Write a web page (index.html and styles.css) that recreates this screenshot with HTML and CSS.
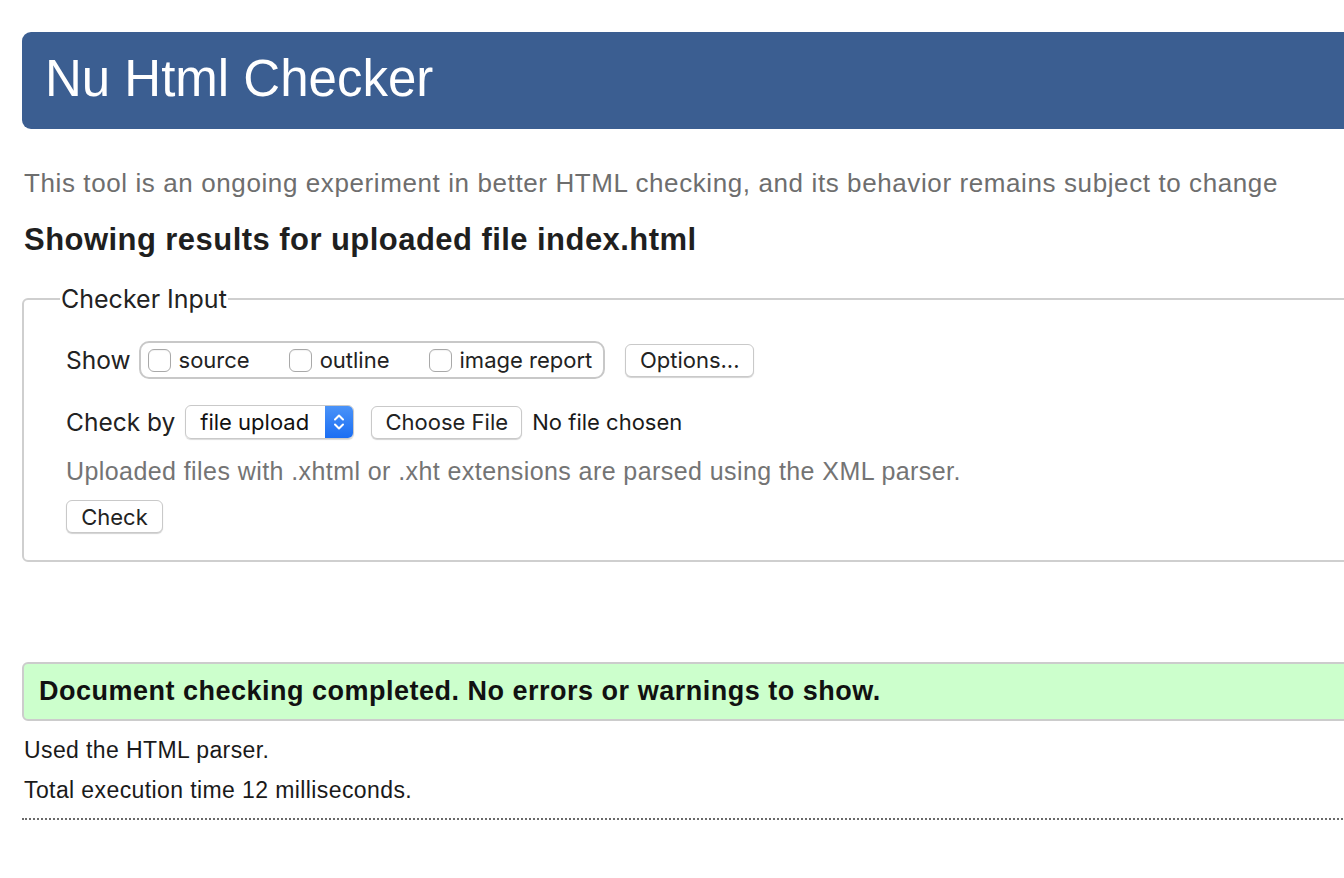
FILE: index.html
```html
<!DOCTYPE html>
<html lang="en">
<head>
<meta charset="utf-8">
<title>Nu Html Checker</title>
<link rel="stylesheet" href="styles.css">
</head>
<body>
<div class="page">
  <h1 class="banner">Nu Html Checker</h1>
  <p class="intro">This tool is an ongoing experiment in better HTML checking, and its behavior remains subject to change</p>
  <h2 class="results-title">Showing results for uploaded file index.html</h2>
  <fieldset class="checker">
    <legend class="legend">Checker Input</legend>
    <div class="row show-row">
      <span class="label">Show</span>
      <div class="show-group">
        <label class="opt"><span class="cb"></span>source</label>
        <label class="opt"><span class="cb"></span>outline</label>
        <label class="opt"><span class="cb"></span>image report</label>
      </div>
      <button class="btn options">Options...</button>
    </div>
    <div class="row by-row">
      <span class="label">Check by</span>
      <div class="select">
        <span class="select-text">file upload</span>
        <span class="stepper">
          <svg width="14" height="22" viewBox="0 0 14 22"><path d="M3 8.5 L7 4.5 L11 8.5 M3 13.5 L7 17.5 L11 13.5" fill="none" stroke="#fff" stroke-width="2" stroke-linecap="round" stroke-linejoin="round"/></svg>
        </span>
      </div>
      <button class="btn choose">Choose File</button>
      <span class="nofile">No file chosen</span>
    </div>
    <p class="hint">Uploaded files with .xhtml or .xht extensions are parsed using the XML parser.</p>
    <button class="btn check">Check</button>
  </fieldset>
  <div class="success">Document checking completed. No errors or warnings to show.</div>
  <p class="meta">Used the HTML parser.</p>
  <p class="meta">Total execution time 12 milliseconds.</p>
  <hr class="dots">
</div>
</body>
</html>
```

FILE: styles.css
```css
html, body {
  margin: 0;
  padding: 0;
  background: #fff;
  overflow: hidden;
}
body {
  font-family: "Liberation Sans", Arial, sans-serif;
  color: #222;
}
.page {
  width: 1400px;
  padding: 32px 0 0 22px;
}
.banner {
  margin: 0;
  height: 97px;
  box-sizing: border-box;
  background: #3b5e91;
  color: #fff;
  border-radius: 9px;
  font-weight: normal;
  font-size: 51px;
  line-height: 94px;
  padding-left: 23px;
}
.intro {
  margin: 40px 0 0 2px;
  font-size: 26px;
  letter-spacing: 0.6px;
  line-height: 28px;
  color: #6e6e6e;
}
.results-title {
  margin: 27px 0 0 2px;
  font-size: 31px;
  letter-spacing: 0.45px;
  line-height: 32px;
  color: #1f1f1f;
}
.checker {
  margin: 28px 0 0 0;
  border: 2px solid #cfcfcf;
  border-radius: 6px;
  padding: 8px 0 26px 42px;
  height: 278px;
  box-sizing: border-box;
  font-family: "Inter", "Liberation Sans", sans-serif;
}
.legend {
  font-size: 25px;
  color: #222;
  padding: 0 1px;
  margin-left: -6px;
}
.row {
  display: flex;
  align-items: center;
}
.label {
  font-size: 24.5px;
  color: #222;
}
.show-row {
  margin-top: 19px;
}
.show-group {
  display: flex;
  align-items: center;
  margin-left: 8px;
  border: 2px solid #c8c8c8;
  border-radius: 10px;
  height: 38px;
  box-sizing: border-box;
  padding: 0 11px 0 7px;
  gap: 39px;
}
.opt {
  display: flex;
  align-items: center;
  font-size: 22px;
  color: #222;
}
.cb {
  width: 23px;
  height: 23px;
  box-sizing: border-box;
  border: 1.5px solid #a9a9a9;
  border-radius: 6px;
  background: #fff;
  margin-right: 8px;
  box-shadow: inset 0 1px 1px rgba(0,0,0,0.05);
}
.btn {
  font-family: "Inter", "Liberation Sans", sans-serif;
  font-size: 22px;
  color: #222;
  background: #fff;
  border: 1px solid #c9c9c9;
  border-radius: 6px;
  box-shadow: 0 1px 1px rgba(0,0,0,0.18);
  padding: 0;
  height: 33px;
  box-sizing: border-box;
}
.options {
  margin-left: 20px;
  width: 129px;
}
.by-row {
  margin-top: 26px;
}
.select {
  margin-left: 10px;
  display: flex;
  align-items: stretch;
  width: 169px;
  height: 34px;
  box-sizing: border-box;
  border: 1px solid #c9c9c9;
  border-radius: 6px;
  box-shadow: 0 1px 1px rgba(0,0,0,0.15);
  overflow: hidden;
}
.select-text {
  flex: 1;
  font-size: 22px;
  line-height: 32px;
  padding-left: 14px;
  color: #111;
}
.stepper {
  width: 28px;
  background: linear-gradient(#4a93f8, #1b6ef3);
  display: flex;
  align-items: center;
  justify-content: center;
}
.choose {
  margin-left: 17px;
  width: 151px;
}
.nofile {
  margin-left: 10px;
  font-size: 22px;
  color: #1a1a1a;
}
.hint {
  margin: 18px 0 0 0;
  font-family: "Liberation Sans", Arial, sans-serif;
  font-size: 25px;
  letter-spacing: 0.42px;
  line-height: 28px;
  color: #747474;
}
.check {
  margin-top: 15px;
  width: 97px;
  display: block;
}
.success {
  margin-top: 100px;
  height: 59px;
  box-sizing: border-box;
  background: #ccffcc;
  border: 2px solid #cccccc;
  border-radius: 6px;
  padding-left: 15px;
  font-size: 27px;
  letter-spacing: 0.5px;
  font-weight: bold;
  line-height: 55px;
  color: #111;
}
.meta {
  margin: 16px 0 0 2px;
  font-size: 23px;
  letter-spacing: 0.4px;
  line-height: 26px;
  color: #1a1a1a;
}
.meta + .meta {
  margin-top: 14px;
}
.dots {
  margin: 15px 0 0 0;
  border: 0;
  border-top: 2px dotted #6a6a6a;
  height: 0;
}
```
